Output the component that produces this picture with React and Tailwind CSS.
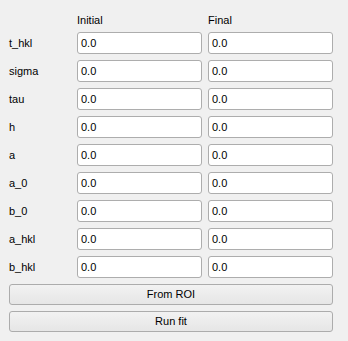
const params = ["t_hkl", "sigma", "tau", "h", "a", "a_0", "b_0", "a_hkl", "b_hkl"];

const Field = ({ value }) => (
  <div className="w-[125px] h-[22px] bg-white border border-[#adadad] rounded-[3px] flex items-center pl-[3px] text-[11px] text-black">
    {value}
  </div>
);

const Btn = ({ label }) => (
  <div className="h-[21px] w-[324px] ml-[9px] rounded-[3px] border border-[#acacac] bg-gradient-to-b from-[#f2f2f2] to-[#e6e6e6] flex items-center justify-center text-[11px] text-black">
    {label}
  </div>
);

export default function App() {
  return (
    <div
      className="w-[348px] h-[341px] bg-[#f0f0f0] overflow-hidden"
      style={{ fontFamily: "'Liberation Sans', Arial, sans-serif" }}
    >
      <div className="flex h-[32px] items-start text-[11px] leading-[13px] text-black pt-[14px]">
        <div className="w-[77px]" />
        <div className="w-[131px]">Initial</div>
        <div>Final</div>
      </div>
      <div className="flex flex-col gap-[6px]">
        {params.map((p) => (
          <div key={p} className="flex items-center h-[22px]">
            <div className="w-[68px] ml-[9px] text-[11px] text-black">{p}</div>
            <Field value="0.0" />
            <div className="w-[6px]" />
            <Field value="0.0" />
          </div>
        ))}
      </div>
      <div className="flex flex-col gap-[6px] mt-[6px]">
        <Btn label="From ROI" />
        <Btn label="Run fit" />
      </div>
    </div>
  );
}
